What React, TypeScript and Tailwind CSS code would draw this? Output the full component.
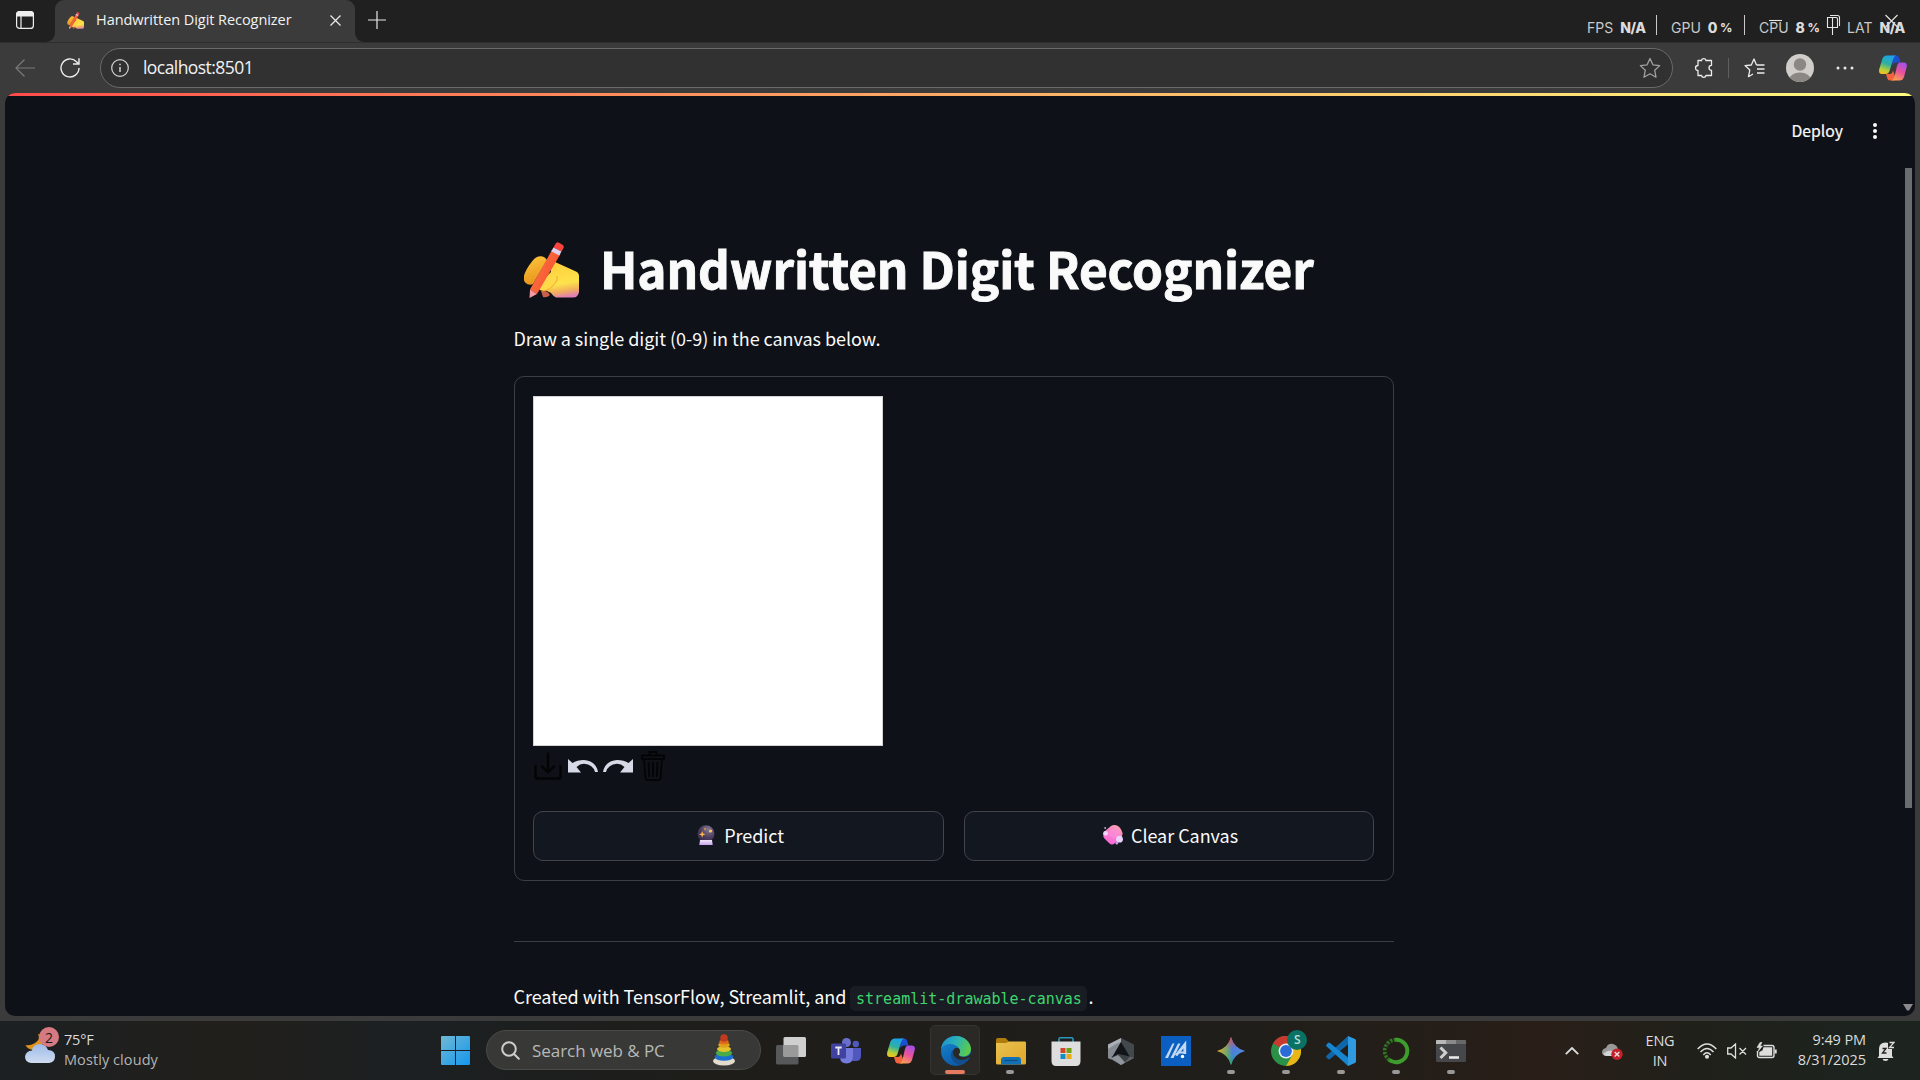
import React from "react";

const source = "font-['Noto_Sans_CJK_SC',sans-serif]";
const segoe = "font-['Open_Sans',sans-serif]";

function WritingHand({ id, className }: { id: string; className: string }) {
  return (
    <svg viewBox="0 0 56 56" className={className}>
      <defs>
        <linearGradient id={id + "a"} x1="0" y1="0" x2="0.3" y2="1">
          <stop offset="0" stopColor="#ffc83c" />
          <stop offset="1" stopColor="#e8961f" />
        </linearGradient>
        <linearGradient id={id + "b"} x1="0.4" y1="0" x2="0.6" y2="1">
          <stop offset="0" stopColor="#ffce3a" />
          <stop offset="0.62" stopColor="#fde24c" />
          <stop offset="0.82" stopColor="#f3b25a" />
          <stop offset="1" stopColor="#e07fb4" />
        </linearGradient>
        <linearGradient id={id + "c"} x1="0" y1="0" x2="1" y2="0.6">
          <stop offset="0" stopColor="#ff7a45" />
          <stop offset="1" stopColor="#f4502f" />
        </linearGradient>
      </defs>
      <path d="M1 34C2 29 9 18 13 15.500C17 13 22 14 24 18L10 42C6 44 0 41 1 36Z" fill={`url(#${id}a)`} />
      <path d="M28 24L32 20L53 29.500Q56 31 56 34V50Q55 55.500 50 55.500H33Q30 54 28 51L22 48Q14 48 15 44L24 34L28 30Z" fill={`url(#${id}b)`} />
      <path d="M18 49Q24 48 27 53Q24 56 20 55Z" fill="#c9604a" />
      <path d="M15 46Q14 43 19 39Q27 31 34 33Q37 36 33 40Q27 49 21 49Q17 49 15 46Z" fill="#ffd94a" />
      <path d="M19 49Q27 49 33 40Q35 37 34 34" fill="none" stroke="#dd9c2c" strokeWidth="1" opacity="0.7" />
      <path d="M29 8L37.500 12L14 52L7 47.500Z" fill={`url(#${id}c)`} />
      <path d="M32.500 1.800Q34 -0.500 36 0.700L39.500 2.700Q41.500 4 40.500 6L38.500 9.500L30.500 5.500Z" fill="#f8443c" />
      <path d="M30.500 5.500L38.500 9.500L36.200 13.500L28.200 9.300Z" fill="#e0d0ee" />
      <path d="M7 47.500L14 52L6.500 56Z" fill="#f59aa0" />
    </svg>
  );
}

function CrystalBall() {
  return (
    <svg viewBox="0 0 18 20" className="h-5 w-[18px]">
      <defs>
        <radialGradient id="ball" cx="0.65" cy="0.25" r="0.85">
          <stop offset="0" stopColor="#83798f" />
          <stop offset="0.6" stopColor="#483b5c" />
          <stop offset="1" stopColor="#3a2a50" />
        </radialGradient>
        <linearGradient id="base" x1="0" y1="0" x2="0" y2="1">
          <stop offset="0" stopColor="#efe8f8" />
          <stop offset="1" stopColor="#c9a3ec" />
        </linearGradient>
      </defs>
      <circle cx="9" cy="8.700" r="8.500" fill="url(#ball)" />
      <path d="M3 15H15L15.700 20H2.300Z" fill="url(#base)" />
      <path d="M5.200 6L6.100 8.400L8.500 9.300L6.100 10.200L5.200 12.600L4.300 10.200L1.900 9.300L4.300 8.400Z" fill="#ffb648" />
      <path d="M8 2.300L8.500 3.400L9.600 3.900L8.500 4.400L8 5.500L7.500 4.400L6.400 3.900L7.500 3.400Z" fill="#f09c4b" />
      <circle cx="13.500" cy="6" r="1.600" fill="#ffc266" />
    </svg>
  );
}

function Soap() {
  return (
    <svg viewBox="0 0 20 20" className="size-5">
      <defs>
        <linearGradient id="soap" x1="0.8" y1="0" x2="0.2" y2="1">
          <stop offset="0" stopColor="#ffa3ad" />
          <stop offset="0.5" stopColor="#f77fc9" />
          <stop offset="1" stopColor="#fb62e0" />
        </linearGradient>
      </defs>
      <path d="M8 1Q11-1 15 1Q18 3 19.500 8Q20 11 17 14L12 18Q9 21 6 18L1 13Q-1 9 2 6Z" fill="url(#soap)" />
      <path d="M8 4L14 3L17 8L11 14L5 10Z" fill="#ff8fe0" opacity="0.5" />
      <circle cx="2.600" cy="8.300" r="2.400" fill="#f0d5fb" />
      <circle cx="2.200" cy="3" r="1" fill="#b7a3cf" />
      <circle cx="16.500" cy="14.200" r="3.400" fill="#ecd2fb" />
      <circle cx="13.800" cy="18" r="1.500" fill="#c99ceb" />
    </svg>
  );
}

function Copilot({ id }: { id: string }) {
  return (
    <svg viewBox="0 0 28 26" className="h-[26px] w-7">
      <defs>
        <linearGradient id={id + "l"} x1="0.6" y1="0" x2="0.3" y2="1">
          <stop offset="0" stopColor="#1ba3ea" />
          <stop offset="0.45" stopColor="#2fb0a0" />
          <stop offset="0.8" stopColor="#b9cf35" />
          <stop offset="1" stopColor="#f5c01f" />
        </linearGradient>
        <linearGradient id={id + "r"} x1="0.7" y1="0" x2="0.3" y2="1">
          <stop offset="0" stopColor="#a550ea" />
          <stop offset="0.5" stopColor="#e9529a" />
          <stop offset="1" stopColor="#fba053" />
        </linearGradient>
      </defs>
      <path d="M13 .5H17.500Q19.500 .5 20.200 3L21.500 7.500H17Q14.500 7.500 13.500 10Z" fill="#1c4fd0" />
      <path d="M7 19H11Q13 19 14 15.500L17 24Q16 25.500 14 25.500H11Q9 25.500 8.300 23.500Z" fill="#f4643c" />
      <path d="M8 .5H17Q15 1 14 4.500L10.500 16Q9.500 19 6.500 19H3Q-.8 19 .3 14L3.300 4Q4.500 .5 8 .5Z" fill={`url(#${id}l)`} />
      <path d="M21 7.500H24.500Q28.700 7.500 27.700 12L25 22Q23.800 25.500 20.500 25.500H12.500Q14.500 25 15.500 21.500L18 11Q19 7.500 21 7.500Z" fill={`url(#${id}r)`} />
    </svg>
  );
}

function EdgeIcon() {
  return (
    <svg viewBox="0 0 30 30" className="size-[30px]">
      <defs>
        <linearGradient id="eg" x1="0" y1="0.2" x2="1" y2="0.5">
          <stop offset="0" stopColor="#1f8fd0" />
          <stop offset="0.5" stopColor="#2bb3b5" />
          <stop offset="1" stopColor="#5ecb45" />
        </linearGradient>
        <linearGradient id="eb" x1="0" y1="0" x2="0.5" y2="1">
          <stop offset="0" stopColor="#1688d2" />
          <stop offset="1" stopColor="#0c5aa8" />
        </linearGradient>
      </defs>
      <circle cx="15" cy="15" r="15" fill="url(#eb)" />
      <path d="M0 13C1 5 7 0 15 0C24 0 30 7 30 13C30 18 26 20.500 22 20.500C19 20.500 17.500 19.500 18 18C19.500 16.500 19 14 18 12.500C15 7 4 6 0 13Z" fill="url(#eg)" />
      <path d="M12 14C7 19 12 29 20 28.500C24 27.500 27 24.500 28.500 22C23 25 13 24 12 14Z" fill="#124d8c" />
      <path d="M30 17C29 19.500 26 21 22.500 21C19 21 17 19.500 18 18C19.300 16.500 19.300 14 18 12.500C15 10.500 12 13 12 16C12 22 19 26.500 27.500 22L30.500 20Z" fill="#2a2824" />
    </svg>
  );
}

function Teams() {
  return (
    <svg viewBox="0 0 30 30" className="size-[30px]">
      <circle cx="15.500" cy="6.500" r="4.500" fill="#6a6fcd" />
      <circle cx="24.800" cy="8" r="3.200" fill="#5158bd" />
      <path d="M20 12H30V20Q30 25 25 25H20Z" fill="#5158bd" />
      <path d="M9 12H22V20Q22 27.500 15.500 27.500Q9 27.500 9 21Z" fill="#757bdc" />
      <rect x="0" y="7.500" width="15" height="15" rx="1.500" fill="#3f429e" />
      <path d="M4.300 11.500H10.700M7.500 11.500V19" stroke="#e8e8f8" strokeWidth="1.800" />
    </svg>
  );
}

function Folder() {
  return (
    <svg viewBox="0 0 30 30" className="size-[30px]">
      <defs>
        <linearGradient id="fo" x1="0" y1="0" x2="1" y2="1">
          <stop offset="0" stopColor="#e9c250" />
          <stop offset="1" stopColor="#e0a72a" />
        </linearGradient>
      </defs>
      <path d="M0 4Q0 2 2 2H9.500L13 5.500V12H0Z" fill="#b07d0c" />
      <path d="M0 7H10L13 5.500H29Q30 5.500 30 7V27Q30 28.500 28.500 28.500H1.500Q0 28.500 0 27Z" fill="url(#fo)" />
      <path d="M5 28.500V24Q5 21 8 21H22Q25 21 25 24V28.500Z" fill="#1271b5" />
      <path d="M8.500 24.500H21.500" stroke="#0b4c86" strokeWidth="1.200" />
    </svg>
  );
}

function Store() {
  return (
    <svg viewBox="0 0 30 30" className="size-[30px]">
      <path d="M8 6V3Q8 1.700 9.300 1.700H20.700Q22 1.700 22 3V6" fill="none" stroke="#2897bd" strokeWidth="1.600" />
      <path d="M.5 5.500H29.500V25Q29.500 30 25 30H5Q.5 30 .5 25Z" fill="#dedede" />
      <path d="M9.500 12H14.500V17H9.500Z" fill="#d4432a" />
      <path d="M15.500 12H20.500V17H15.500Z" fill="#6fa010" />
      <path d="M9.500 18H14.500V23H9.500Z" fill="#0e8ecb" />
      <path d="M15.500 18H20.500V23H15.500Z" fill="#e8aa12" />
    </svg>
  );
}

function Armoury() {
  return (
    <svg viewBox="0 0 30 30" className="size-[30px]">
      <path d="M15 2L28 8.500V22L15 29L2 22V8.500Z" fill="#43484d" />
      <path d="M15 2L2 8.500V20L15 6Z" fill="#a9afb5" />
      <path d="M2 13V22L5 23.500L15 6L10 8Z" fill="#858b91" />
      <path d="M5 20L15 29L28 22L22 20Z" fill="#5d6268" />
      <path d="M15 6L24 21L12 18L6 21.500Z" fill="#121517" />
      <path d="M5 22.500L12 19L19 26.500L15 29Z" fill="#8f959b" />
      <path d="M12 18L24 20.500L19 26Z" fill="#3b4045" />
    </svg>
  );
}

function MyAsus() {
  return (
    <svg viewBox="0 0 30 30" className="size-[30px]">
      <rect width="30" height="30" fill="#0b5fc0" />
      <path d="M4 22L11.500 7.500H13.500L7 22Z" fill="#c2d8f2" />
      <path d="M9.500 22L17 7.500H19.500L12.500 22Z" fill="#c2d8f2" />
      <path d="M15 19.500L23.800 8.500V18" fill="none" stroke="#c2d8f2" strokeWidth="2.800" />
      <path d="M17 16.500H24" stroke="#c2d8f2" strokeWidth="2" />
      <circle cx="21.500" cy="20.500" r="1.700" fill="#fff" />
    </svg>
  );
}

function Gemini() {
  return (
    <svg viewBox="0 0 30 30" className="size-[30px]">
      <defs>
        <linearGradient id="g1" x1="0" y1="0.5" x2="1" y2="0.5">
          <stop offset="0" stopColor="#f0b51c" />
          <stop offset="0.35" stopColor="#6fae6a" />
          <stop offset="0.55" stopColor="#3d83e8" />
          <stop offset="1" stopColor="#4a8df0" />
        </linearGradient>
        <linearGradient id="g2" x1="0.5" y1="0" x2="0.5" y2="1">
          <stop offset="0" stopColor="#ea4a45" />
          <stop offset="0.42" stopColor="#d8506a" stopOpacity="0.1" />
          <stop offset="0.7" stopColor="#2fa75a" stopOpacity="0.2" />
          <stop offset="1" stopColor="#2fa75a" />
        </linearGradient>
      </defs>
      <path d="M15 1Q18 12 29 15Q18 18 15 29Q12 18 1 15Q12 12 15 1Z" fill="url(#g1)" />
      <path d="M15 1Q18 12 29 15Q18 18 15 29Q12 18 1 15Q12 12 15 1Z" fill="url(#g2)" />
    </svg>
  );
}

function Chrome() {
  return (
    <div className="relative size-[30px]">
      <svg viewBox="0 0 30 30" className="size-[30px]">
        <circle cx="15" cy="15" r="15" fill="#2b9148" />
        <path d="M15 15L2 7.500A15 15 0 0 1 28 7.500Z" fill="#c93a2e" />
        <path d="M15 7.500H28A15 15 0 0 1 15 30L21.500 18.700Z" fill="#eab516" />
        <circle cx="15" cy="15" r="7.500" fill="#e9eef5" />
        <circle cx="15" cy="15" r="5.900" fill="#2b6bd6" />
      </svg>
      <div className={`${segoe} absolute -top-[6px] left-4 flex size-5 items-center justify-center rounded-full bg-[#0a7264] text-[12px] font-semibold text-[#b9dcd6]`}>S</div>
    </div>
  );
}

function VsCode() {
  return (
    <svg viewBox="0 0 30 30" className="size-[30px]">
      <path d="M22 0V8.500L4 23Q3 23.800 2 23L.5 21.500Q-.3 20.500 .7 19.500Z" fill="#0f66a8" />
      <path d="M22 30V21.500L4 7Q3 6.200 2 7L.5 8.500Q-.3 9.500 .7 10.500Z" fill="#1684cf" />
      <path d="M22 0L29 3Q30 3.500 30 5V25Q30 26.500 29 27L22 30Z" fill="#2f9ae0" />
    </svg>
  );
}

function Anaconda() {
  return (
    <svg viewBox="0 0 30 30" className="size-[30px]">
      <path d="M14 3.700A11.300 11.300 0 1 1 8 23.800" fill="none" stroke="#3d9c2c" strokeWidth="4" />
      <path d="M8.500 24.200A11.300 11.300 0 0 1 14 3.700" fill="none" stroke="#2f7a24" strokeWidth="3.600" strokeDasharray="2.500 1.200" />
      <path d="M7 22A11 11 0 0 1 10 5.500" fill="none" stroke="#1c2a18" strokeWidth="1.200" strokeDasharray="1.500 2" />
    </svg>
  );
}

function Terminal() {
  return (
    <svg viewBox="0 0 30 30" className="size-[30px]">
      <rect y="4" width="30" height="22" rx="1" fill="#45474a" />
      <path d="M0 5Q0 4 1 4H10V8H0Z" fill="#b8b8b8" />
      <path d="M10 4H20V8H10Z" fill="#8a8a8a" />
      <path d="M20 4H29Q30 4 30 5V8H20Z" fill="#686868" />
      <path d="M4.500 11.500L9.700 16.800L4.500 22" fill="none" stroke="#d0d0d0" strokeWidth="3" />
      <path d="M13 21.500H23" stroke="#e8e8e8" strokeWidth="2.600" />
    </svg>
  );
}

function TaskView() {
  return (
    <svg viewBox="0 0 30 30" className="size-[30px]">
      <rect x="0" y="9" width="22.500" height="19.500" rx="1.500" fill="#57585a" />
      <rect x="7.500" y="1" width="22.500" height="20" rx="1.500" fill="#d0d0d0" />
      <path d="M7.500 9H21Q22.500 9 22.500 10.500V21H9Q7.500 21 7.500 19.500Z" fill="#9a9a9a" />
    </svg>
  );
}

function StackToy() {
  return (
    <svg viewBox="0 0 22 32" className="h-8 w-[22px]">
      <ellipse cx="11" cy="27" rx="11" ry="4.500" fill="#e4dccb" />
      <ellipse cx="11" cy="23" rx="9.300" ry="3.800" fill="#1a6fd0" />
      <ellipse cx="11" cy="19" rx="8.200" ry="3.500" fill="#49ac48" />
      <ellipse cx="11" cy="15" rx="7" ry="3" fill="#e3c22a" />
      <ellipse cx="11" cy="11" rx="5.800" ry="2.700" fill="#dfa01c" />
      <ellipse cx="11" cy="8" rx="4.800" ry="2.300" fill="#e06a1c" />
      <circle cx="11" cy="4" r="3.800" fill="#c23a1e" />
    </svg>
  );
}

function Meter({ label, value, unit, className }: { label: string; value: string; unit: string; className: string }) {
  return (
    <div className={`flex ${className}`}>
      <span>{label}</span>
      <span className="ml-[7px] font-extrabold tracking-[-0.500px] text-[#dcdcdc]">{value}</span>
      {unit && <span className="ml-[3px] text-[12px] font-extrabold text-[#dcdcdc]">{unit}</span>}
    </div>
  );
}

function TabStrip() {
  return (
    <div className="relative flex h-[42px] bg-[#202020]">
      <div className="w-[55px] bg-[#3b3b3b]">
        <div className="flex h-[42px] items-center rounded-br-[9px] bg-[#202020] pb-[2px] pl-4">
          <svg viewBox="0 0 18 18" className="size-[18px]" fill="none" stroke="#eee" strokeWidth="1.200">
            <rect x=".6" y=".6" width="16.800" height="16.800" rx="3" />
            <path d="M5 5V17.400" />
            <path d="M.6 5V3.500Q.6 .6 3.500 .6H14.500Q17.400 .6 17.400 3.500V5Z" fill="#eee" />
          </svg>
        </div>
      </div>
      <div className="flex w-[300px] items-center rounded-t-[9px] bg-[#3b3b3b] pb-[2px] pl-3">
        <WritingHand id="tab" className="size-[17px]" />
        <span className={`${segoe} ml-3 w-[196px] whitespace-nowrap text-[14.500px] tracking-[-0.060px] text-[#f2f2f2]`}>Handwritten Digit Recognizer</span>
        <svg viewBox="0 0 11 11" className="ml-[38px] size-[11px]" stroke="#e8e8e8" strokeWidth="1.300">
          <path d="M.5 .5L10.500 10.500M10.500 .5L.5 10.500" />
        </svg>
      </div>
      <div className="flex-1 bg-[#3b3b3b]">
        <div className="flex h-[42px] items-center rounded-bl-[9px] bg-[#202020] pb-[3px] pl-[13px]">
          <svg viewBox="0 0 18 18" className="size-[18px]" stroke="#e8e8e8" strokeWidth="1.200">
            <path d="M0 9H18M9 0V18" />
          </svg>
        </div>
      </div>
      <svg viewBox="0 0 152 42" className="absolute right-0 top-0 h-[42px] w-[152px]" fill="none" stroke="#e6e6e6" strokeWidth="1.100">
        <path d="M1 20.500H14" />
        <path d="M59.500 17.500H68Q69.500 17.500 69.500 19V27.500H59.500ZM62 15.500H69.500Q71.500 15.500 71.500 17.500V26M64.500 17V35" />
        <path d="M117.500 15L129.500 27M129.500 15L117.500 27" />
      </svg>
      <div className="absolute left-[1587px] top-[15px] flex h-5 whitespace-nowrap font-['Inter',sans-serif] text-[14px] leading-[26px] text-[#c9c9c9]">
        <Meter label="FPS" value="N/A" unit="" className="w-[70px] border-r border-[#c9c9c9]" />
        <Meter label="GPU" value="0" unit="%" className="ml-[14px] w-[74px] border-r border-[#c9c9c9]" />
        <Meter label="CPU" value="8" unit="%" className="ml-[14px] w-[74px]" />
        <Meter label="LAT" value="N/A" unit="" className="ml-[14px] w-[60px]" />
      </div>
    </div>
  );
}

function Toolbar() {
  return (
    <div className="flex h-[51px] items-center border-t border-[#2e2e2e] bg-[#3b3b3b] pb-px">
      <svg viewBox="0 0 20 18" className="ml-[15px] h-[18px] w-5" fill="none" stroke="#7a7a7a" strokeWidth="1.200">
        <path d="M20 9H1M9.500 .5L1 9L9.500 17.500" />
      </svg>
      <svg viewBox="0 0 20 20" className="ml-[25px] size-5" fill="none" stroke="#ececec" strokeWidth="1.400">
        <path d="M19 10A9 9 0 1 1 16.500 3.700L18.500 5.700M19 .3V6H13" />
      </svg>
      <div className="ml-5 flex h-10 w-[1573px] items-center rounded-full border border-[#6a6a6a] bg-[#313131] pl-[10px]">
        <svg viewBox="0 0 18 18" className="size-[18px]" fill="none" stroke="#d4d4d4" strokeWidth="1.200">
          <circle cx="9" cy="9" r="8.300" />
          <path d="M9 8V13M9 4.700V6.200" strokeWidth="1.500" />
        </svg>
        <span className={`${segoe} ml-[14px] pb-px text-[17.500px] tracking-[-0.560px] text-[#f2f2f2]`}>localhost:8501</span>
        <svg viewBox="0 0 24 24" className="ml-auto mr-[10px] size-6" fill="none" stroke="#a0a0a0" strokeWidth="1.300" strokeLinejoin="round">
          <path d="M12 2.500L14.900 8.800L21.700 9.600L16.700 14.300L18 21.200L12 17.800L6 21.200L7.300 14.300L2.300 9.600L9.100 8.800Z" />
        </svg>
      </div>
      <svg viewBox="0 0 20 20" className="ml-[21px] size-5" fill="none" stroke="#ececec" strokeWidth="1.300" strokeLinejoin="round">
        <path d="M4 2.500H7.500A2.300 2.300 0 0 1 12 2.500H17.500V7.300A2.500 2.500 0 1 0 17.500 12.300V17.500H12A2.300 2.300 0 0 1 7.500 17.500H4V12.500A2.300 2.300 0 0 1 4 7.500Z" />
      </svg>
      <div className="ml-[14px] h-5 w-px bg-[#5f5f5f]" />
      <svg viewBox="0 0 22 20" className="ml-[15px] h-5 w-[22px]" fill="none" stroke="#ececec" strokeWidth="1.300" strokeLinejoin="round">
        <path d="M12.500 7L10 1L7.300 7L1 7.600L5.800 12L4.500 18.700L9 16M12.500 7H20.500M13 11H20.500M13 15H20.500" />
      </svg>
      <svg viewBox="0 0 28 28" className="ml-5 size-7">
        <defs><clipPath id="av"><circle cx="14" cy="14" r="14" /></clipPath></defs>
        <g clipPath="url(#av)">
          <rect width="28" height="28" fill="#d0cecb" />
          <circle cx="14" cy="10.500" r="6.200" fill="#8b8784" />
          <ellipse cx="14" cy="26" rx="11" ry="7.500" fill="#8b8784" />
        </g>
      </svg>
      <svg viewBox="0 0 18 4" className="ml-[22px] h-1 w-[18px]" fill="#e8e8e8">
        <circle cx="2" cy="2" r="1.500" /><circle cx="9" cy="2" r="1.500" /><circle cx="16" cy="2" r="1.500" />
      </svg>
      <div className="ml-[25px]"><Copilot id="tb" /></div>
    </div>
  );
}

function Page() {
  return (
    <div className="relative mx-[5px] h-[923px] overflow-hidden rounded-[10px] bg-[#0e1117] text-[#fafafa]">
      <div className="h-[3px] bg-linear-to-r from-[#ff4b4b] to-[#fffd80]" />
      <div className="flex h-[69px] items-center justify-end pr-[37px]">
        <span className={`${source} text-[15.750px] leading-6 [-webkit-text-stroke:0.200px_#fafafa]`}>Deploy</span>
        <svg viewBox="0 0 6 18" className="ml-[29px] h-[18px] w-[6px]" fill="#fafafa">
          <circle cx="3" cy="3" r="2" /><circle cx="3" cy="9" r="2" /><circle cx="3" cy="15" r="2" />
        </svg>
      </div>
      <div className={`${source} ml-[509px] w-[880px] text-[18px] tracking-[-0.040px]`}>
        <h1 className="mt-[70px] flex h-[68px] items-center whitespace-nowrap pb-[2px] text-[49.500px] font-bold leading-[66px] tracking-[-0.120px] [-webkit-text-stroke:0.900px_#fafafa]">
          <WritingHand id="title" className="ml-[9px] mr-[21px] mt-1 size-14" />
          Handwritten Digit Recognizer
        </h1>
        <p className="-ml-[0.500px] mt-[19px] h-8 whitespace-nowrap leading-8">Draw a single digit (0-9) in the canvas below.</p>
        <div className="mt-[22px] h-[505px] rounded-[10px] border border-[#3b3e43] px-[18px] pt-[19px]">
          <div className="size-[350px] border border-[#d3d3d3] bg-white" />
          <div className="mt-1 flex h-[31px] items-center">
            <svg viewBox="0 0 28 28" className="ml-px size-7" fill="none" stroke="#030405" strokeWidth="2.400" strokeLinecap="round" strokeLinejoin="round">
              <path d="M1.500 14V25.500Q1.500 26.500 2.500 26.500H25.500Q26.500 26.500 26.500 25.500V14M14 1.500V20M8 14.500L14 20.500L20 14.500" />
            </svg>
            <svg viewBox="0 0 30 14" className="ml-[6px] h-[14px] w-[30px]" fill="#d6dae6">
              <path d="M0 0L4.500 4Q9 1 16 1Q28 2 30 13H27Q25 5.500 16 4.800Q12 4.700 8.500 8L13 13.500H0Z" />
            </svg>
            <svg viewBox="0 0 30 14" className="ml-[5px] h-[14px] w-[30px] -scale-x-100" fill="#d6dae6">
              <path d="M0 0L4.500 4Q9 1 16 1Q28 2 30 13H27Q25 5.500 16 4.800Q12 4.700 8.500 8L13 13.500H0Z" />
            </svg>
            <svg viewBox="0 0 24 30" className="ml-2 h-[30px] w-6" fill="none" stroke="#030405" strokeWidth="1.800" strokeLinejoin="round">
              <path d="M8.500 4V1H15.500V4M1 4.500H23V8H1ZM3 8L4.500 27.500Q4.700 29 6 29H18Q19.300 29 19.500 27.500L21 8M7.500 11L8.300 26M12 11V26M16.500 11L15.700 26" />
            </svg>
          </div>
          <div className="mt-[30px] flex gap-5">
            <button className="flex h-[50px] w-[411px] items-center justify-center rounded-[10px] border border-[#41444c] bg-[#131720] pb-[3px] pl-1">
              <CrystalBall /><span className="ml-[9px] leading-8">Predict</span>
            </button>
            <button className="flex h-[50px] w-[410px] items-center justify-center rounded-[10px] border border-[#41444c] bg-[#131720] pb-[3px] pl-[3px]">
              <Soap /><span className="ml-2 leading-8">Clear Canvas</span>
            </button>
          </div>
        </div>
        <hr className="mt-[60px] border-t border-[#3b3e43]" />
        <p className="-ml-[0.500px] mt-[38px] flex h-8 items-center whitespace-nowrap leading-8">
          Created with TensorFlow, Streamlit, and
          <code className="ml-1 mt-1 h-[25px] w-[237px] rounded-[5px] bg-[#1a1c24] text-center font-['DejaVu_Sans_Mono',monospace] text-[15px] leading-[26px] tracking-normal text-[#3dd56d]">streamlit-drawable-canvas</code>
          <span className="ml-px">.</span>
        </p>
      </div>
      <div className="absolute right-[3px] top-[75px] h-[640px] w-[7px] bg-[#6b6c70]" />
      <svg viewBox="0 0 10 7" className="absolute bottom-[5px] right-[2px] h-[7px] w-[10px]" fill="#8a8a8e">
        <path d="M0 0H10L6 6.500H4Z" />
      </svg>
    </div>
  );
}

function Task({ children, mark }: { children: React.ReactNode; mark?: "active" | "open" }) {
  return (
    <div className="relative flex h-[59px] w-[55.080px] items-center justify-center">
      {mark === "active" && <div className="absolute left-[2px] top-1 h-[50px] w-[50px] rounded-[5px] border border-[#35332f] bg-[#2b2925]" />}
      <div className="relative">{children}</div>
      {mark === "active" && <div className="absolute left-[17px] top-[49px] h-1 w-5 rounded-full bg-[#e47a60]" />}
      {mark === "open" && <div className="absolute left-[23px] top-[49px] h-1 w-2 rounded-full bg-[#989898]" />}
    </div>
  );
}

function Taskbar() {
  return (
    <div className={`${segoe} flex h-[59px] bg-[linear-gradient(90deg,#1c2022_0%,#211f1b_12%,#1c2022_21%,#1e1d19_38%,#201e1a_65%,#261e18_77%,#2a1f18_80%,#20201a_88%,#1d231e_96%)] text-[#dcdcdc]`}>
      <div className="flex w-[441px] shrink-0 pl-[25px]">
        <div className="relative mt-[6px] h-10 w-[39px]">
          <svg viewBox="0 0 34 36" className="h-9 w-[34px]">
            <defs>
              <linearGradient id="cl" x1="0" y1="0" x2="0" y2="1">
                <stop offset="0" stopColor="#9dbbe8" /><stop offset="1" stopColor="#cfdcf2" />
              </linearGradient>
            </defs>
            <path d="M13 7Q16 12 10 16Q5 19 .5 18Q2 22 8 23L17 19V8Z" fill="#e0931c" />
            <path d="M6 36Q0 35 0 29.500Q1 24 7 23.500Q8 17 15 17Q21 17 23 23Q30 23 30 29.500Q30 35 24 36Z" fill="url(#cl)" />
          </svg>
          <div className="absolute left-[14px] top-0 flex size-5 items-center justify-center rounded-full bg-[#d67a82] text-[14px] text-[#191919]">2</div>
        </div>
        <div className="mt-[9px] text-[14.500px] leading-5">
          <div className="tracking-[-0.200px]">75°F</div>
          <div className="tracking-[0.080px] text-[#b4b4b4]">Mostly cloudy</div>
        </div>
      </div>
      <svg viewBox="0 0 29 29" className="mt-[15px] size-[29px] shrink-0">
        <defs>
          <linearGradient id="wi" x1="0" y1="0" x2="1" y2="1">
            <stop offset="0" stopColor="#6fb9d4" /><stop offset="1" stopColor="#1496ee" />
          </linearGradient>
        </defs>
        <path d="M0 1Q0 0 1 0H14V14H0ZM15 0H28Q29 0 29 1V14H15ZM0 15H14V29H1Q0 29 0 28ZM15 15H29V28Q29 29 28 29H15Z" fill="url(#wi)" />
      </svg>
      <div className="ml-4 mt-[9px] flex h-10 w-[275px] shrink-0 items-center rounded-full border border-[#4a4a48] bg-[#383836] pl-[14px]">
        <svg viewBox="0 0 19 19" className="size-[19px]" fill="none" stroke="#cdcdcd" strokeWidth="2" strokeLinecap="round">
          <circle cx="8" cy="8" r="6.800" /><path d="M13 13L17.800 17.800" />
        </svg>
        <span className="ml-3 whitespace-nowrap pt-px text-[17px] tracking-[-0.050px] text-[#b8b8b8]">Search web &amp; PC</span>
        <div className="ml-auto mr-[25px]"><StackToy /></div>
      </div>
      <div className="ml-[2px] flex shrink-0">
        <Task><TaskView /></Task>
        <Task><Teams /></Task>
        <Task><Copilot id="tk" /></Task>
        <Task mark="active"><EdgeIcon /></Task>
        <Task mark="open"><Folder /></Task>
        <Task><Store /></Task>
        <Task><Armoury /></Task>
        <Task><MyAsus /></Task>
        <Task mark="open"><Gemini /></Task>
        <Task mark="open"><Chrome /></Task>
        <Task mark="open"><VsCode /></Task>
        <Task mark="open"><Anaconda /></Task>
        <Task mark="open"><Terminal /></Task>
      </div>
      <div className="ml-auto flex h-[59px] items-center pr-[25px]">
        <svg viewBox="0 0 14 8" className="h-2 w-[14px]" fill="none" stroke="#dedede" strokeWidth="1.800"><path d="M.8 7.200L7 1L13.200 7.200" /></svg>
        <svg viewBox="0 0 21 17" className="ml-[23px] mt-[2px] h-[17px] w-[21px]">
          <path d="M4 13Q0 12.500 0 9Q.5 5.500 4 5Q6 0 11 1Q15 2 16 6L10 13Z" fill="#999" />
          <path d="M5 13Q2 13 1.500 10.500Q7 6 11 8L10 13Z" fill="#d4d4d4" />
          <circle cx="15" cy="11.300" r="5.700" fill="#c4202c" />
          <path d="M12.700 9L17.300 13.600M17.300 9L12.700 13.600" stroke="#f4dcdc" strokeWidth="1.400" />
        </svg>
        <div className="ml-[18px] w-[38px] text-center text-[14.500px] leading-5 tracking-[-0.200px]"><div>ENG</div><div>IN</div></div>
        <svg viewBox="0 0 20 16" className="ml-[18px] h-4 w-5" fill="none" stroke="#dedede" strokeWidth="1.500">
          <path d="M.7 6Q10-4 19.300 6M3.500 9Q10 1.800 16.500 9M6.300 12Q10 7.600 13.700 12" /><circle cx="10" cy="13.700" r="1.300" fill="#dedede" />
        </svg>
        <svg viewBox="0 0 20 16" className="ml-[10px] h-4 w-5" fill="none" stroke="#dedede" strokeWidth="1.300">
          <path d="M.7 5H4L8.500 1V15L4 11H.7ZM12.500 5L19 11.500M19 5L12.500 11.500" />
        </svg>
        <svg viewBox="0 0 21 17" className="ml-[9px] h-[17px] w-[21px]" fill="none" stroke="#dedede" strokeWidth="1.400">
          <path d="M7.500 3.500H16Q18 3.500 18 5.500V13.500Q18 15.500 16 15.500H3.500Q1.500 15.500 1.500 13.500V9" />
          <path d="M8 6H15.500V13H4V10.500L7 9Z" fill="#dedede" />
          <path d="M4 .5L1 5.500H3.500L2 9.500L6.500 4H4L6 .5Z" fill="#dedede" strokeWidth=".6" />
          <path d="M19.700 7.500V11.500" strokeWidth="2" />
        </svg>
        <div className="mb-[2px] ml-[15px] w-[74px] whitespace-nowrap text-right text-[14.500px] leading-5"><div className="tracking-[-0.100px]">9:49 PM</div><div className="tracking-[-0.050px]">8/31/2025</div></div>
        <svg viewBox="0 0 18 20" className="ml-[11px] h-5 w-[18px]">
          <path d="M2 15V8Q2 1.500 8.500 1.500Q15 1.500 15 8V15L16.500 17H.5Z" fill="#dedede" />
          <path d="M5.500 18H11.500Q11 20 8.500 20Q6 20 5.500 18Z" fill="#dedede" />
          <path d="M5.500 7.500H9L5.500 12H9.500" fill="none" stroke="#20241e" strokeWidth="1.300" />
          <path d="M11 0H18V8H11Z" fill="#20241e" />
          <path d="M12.500 1.500H17L12.500 6.500H17" fill="none" stroke="#dedede" strokeWidth="1.300" />
        </svg>
      </div>
    </div>
  );
}

export default function App() {
  return (
    <div className="flex h-[1080px] w-[1920px] flex-col overflow-hidden bg-[#3b3b3b]">
      <TabStrip />
      <Toolbar />
      <Page />
      <div className="h-[5px] bg-[#3b3b3b]" />
      <Taskbar />
    </div>
  );
}
